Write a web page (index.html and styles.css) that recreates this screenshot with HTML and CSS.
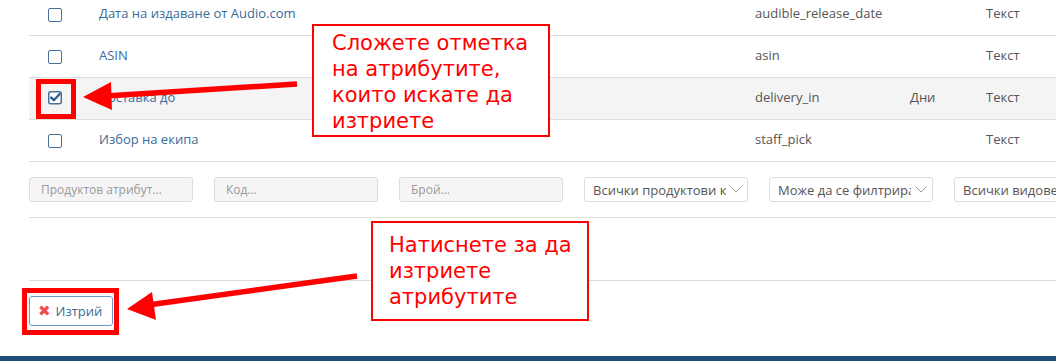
FILE: index.html
```html
<!DOCTYPE html>
<html lang="bg">
	<head>
		<meta charset="UTF-8" />
		<title>Продуктови атрибути</title>
		<link rel="stylesheet" href="styles.css">
	</head>
	<body>
		<div class="page">
			<div class="attr-list">
				<div class="attr-row">
					<span class="check"></span>
					<a class="attr-name" href="#">Дата на издаване от Audio.com</a>
					<span class="attr-code">audible_release_date</span>
					<span class="attr-unit"></span>
					<span class="attr-type">Текст</span>
				</div>
				<div class="attr-row">
					<span class="check"></span>
					<a class="attr-name" href="#">ASIN</a>
					<span class="attr-code">asin</span>
					<span class="attr-unit"></span>
					<span class="attr-type">Текст</span>
				</div>
				<div class="attr-row selected">
					<span class="check checked">
						<svg width="16" height="16" viewBox="0 0 16 16">
							<rect x="1.75" y="2.75" width="12.5" height="12" rx="2" fill="#fff" stroke="#4a7097" stroke-width="1.5"/>
							<path d="M4.2 8.6 L6.9 11.2 L12.6 5" fill="none" stroke="#2f5f8c" stroke-width="2.4" stroke-linecap="round" stroke-linejoin="round"/>
						</svg>
					</span>
					<a class="attr-name" href="#">Доставка до</a>
					<span class="attr-code">delivery_in</span>
					<span class="attr-unit">Дни</span>
					<span class="attr-type">Текст</span>
				</div>
				<div class="attr-row">
					<span class="check"></span>
					<a class="attr-name" href="#">Избор на екипа</a>
					<span class="attr-code">staff_pick</span>
					<span class="attr-unit"></span>
					<span class="attr-type">Текст</span>
				</div>
			</div>

			<div class="filters">
				<input class="filter-input" type="text" placeholder="Продуктов атрибут...">
				<input class="filter-input" type="text" placeholder="Код...">
				<input class="filter-input" type="text" placeholder="Брой...">
				<div class="filter-select">
					<span class="select-text">Всички продуктови категории</span>
					<svg class="chevron" width="12" height="7" viewBox="0 0 12 7"><polyline points="0.5,0.5 6,6 11.5,0.5" fill="none" stroke="#999" stroke-width="1"/></svg>
				</div>
				<div class="filter-select">
					<span class="select-text">Може да се филтрира</span>
					<svg class="chevron" width="12" height="7" viewBox="0 0 12 7"><polyline points="0.5,0.5 6,6 11.5,0.5" fill="none" stroke="#999" stroke-width="1"/></svg>
				</div>
				<div class="filter-select">
					<span class="select-text">Всички видове</span>
					<svg class="chevron" width="12" height="7" viewBox="0 0 12 7"><polyline points="0.5,0.5 6,6 11.5,0.5" fill="none" stroke="#999" stroke-width="1"/></svg>
				</div>
			</div>

			<div class="empty-row"></div>

			<div class="actions">
				<button class="btn-delete"><span class="btn-icon">✖</span>Изтрий</button>
			</div>

			<footer class="bottom-bar"></footer>

			<!-- Анотации -->
			<div class="mark mark-check"></div>
			<div class="mark mark-button"></div>
			<div class="callout callout-top">Сложете отметка<br>на атрибутите,<br>които искате да<br>изтриете</div>
			<div class="callout callout-bottom">Натиснете за да<br>изтриете<br>атрибутите</div>
			<svg class="arrows" width="1056" height="361" viewBox="0 0 1056 361">
				<line x1="297" y1="84" x2="106" y2="96" stroke="#ff0000" stroke-width="5.5"/>
				<polygon points="83,97 111,82 112,110" fill="#ff0000"/>
				<line x1="357" y1="276" x2="148" y2="305" stroke="#ff0000" stroke-width="5.5"/>
				<polygon points="127,309 152,292 156,320" fill="#ff0000"/>
			</svg>
		</div>
	</body>
</html>
```

FILE: styles.css
```css
:root {
	--link-color: #3a6b98;
	--text-color: #555555;
	--line-color: #dddddd;
	--mark-color: #ff0000;
	--bar-color: #1b4d76;
	--font-family: 'Open Sans', sans-serif;
}

body {
	margin: 0;
	font-family: var(--font-family);
	font-size: 13px;
	color: var(--text-color);
	background-color: #ffffff;
	overflow: hidden;
}

.page {
	position: relative;
	padding-left: 29px;
	height: 361px;
	overflow: hidden;
}

/* Таблица с атрибути */
.attr-list {
	margin-top: -6px;
}
.attr-row {
	display: grid;
	grid-template-columns: 70px 656px 155px 76px 1fr;
	align-items: center;
	box-sizing: border-box;
	height: 42px;
	padding-bottom: 3px;
	border-bottom: 1px solid var(--line-color);
}
.attr-row.selected {
	background-color: #f4f4f4;
}
.check {
	box-sizing: border-box;
	width: 14px;
	height: 14px;
	margin-left: 19px;
	margin-top: 3px;
	border: 1.5px solid #4a7097;
	border-radius: 2px;
	background-color: #ffffff;
}
.check.checked {
	border: none;
	background: none;
	width: 16px;
	height: 16px;
	margin-left: 18px;
	margin-top: 0;
}
.attr-name {
	color: var(--link-color);
	text-decoration: none;
}

/* Филтри */
.filters {
	display: flex;
	gap: 21px;
	padding: 15px 0;
	border-bottom: 1px solid var(--line-color);
	overflow: hidden;
	white-space: nowrap;
}
.filter-input {
	flex: none;
	width: 164px;
	min-width: 0;
	box-sizing: border-box;
	height: 25px;
	padding: 0 11px;
	border: 1px solid #dcdcdc;
	border-radius: 3px;
	background-color: #f5f5f5;
	font-family: var(--font-family);
	font-size: 12px;
}
.filter-input::placeholder {
	color: #999999;
}
.filter-select {
	flex: none;
	width: 164px;
	min-width: 0;
	box-sizing: border-box;
	height: 25px;
	display: flex;
	align-items: center;
	padding: 0 5px 0 8px;
	border: 1px solid #dcdcdc;
	border-radius: 3px;
	background-color: #ffffff;
}
.select-text {
	flex: 1;
	min-width: 0;
	overflow: hidden;
	color: #555555;
	font-size: 13px;
}
.chevron {
	flex: none;
	margin-left: 4px;
}

.empty-row {
	height: 62px;
	border-bottom: 1px solid var(--line-color);
}

/* Бутон */
.actions {
	height: 60px;
	padding-top: 15px;
}
.btn-delete {
	height: 30px;
	padding: 0 10px 0 8px;
	display: flex;
	align-items: center;
	gap: 5px;
	border: 1px solid #6f98c0;
	border-radius: 3px;
	background-color: #ffffff;
	color: var(--link-color);
	font-family: var(--font-family);
	font-size: 13px;
}
.btn-icon {
	color: #ef4b4b;
	font-family: 'DejaVu Sans', sans-serif;
	font-size: 15px;
	line-height: 1;
}

.bottom-bar {
	height: 40px;
	margin-left: -29px;
	background-color: var(--bar-color);
}

/* Анотации върху екрана */
.mark {
	position: absolute;
	box-sizing: border-box;
	border: 5px solid var(--mark-color);
}
.mark-check {
	left: 36px;
	top: 79px;
	width: 40px;
	height: 40px;
}
.mark-button {
	left: 22px;
	top: 288px;
	width: 97px;
	height: 47px;
}
.callout {
	position: absolute;
	box-sizing: border-box;
	border: 2px solid var(--mark-color);
	background-color: #ffffff;
	color: var(--mark-color);
	font-family: 'DejaVu Sans', sans-serif;
	font-size: 21px;
	line-height: 26px;
	white-space: nowrap;
}
.callout-top {
	left: 312px;
	top: 24px;
	width: 238px;
	height: 113px;
	padding: 4px 0 0 18px;
}
.callout-bottom {
	left: 371px;
	top: 221px;
	width: 218px;
	height: 100px;
	padding: 9px 0 0 16px;
}
.arrows {
	position: absolute;
	left: 0;
	top: 0;
	pointer-events: none;
}
```
